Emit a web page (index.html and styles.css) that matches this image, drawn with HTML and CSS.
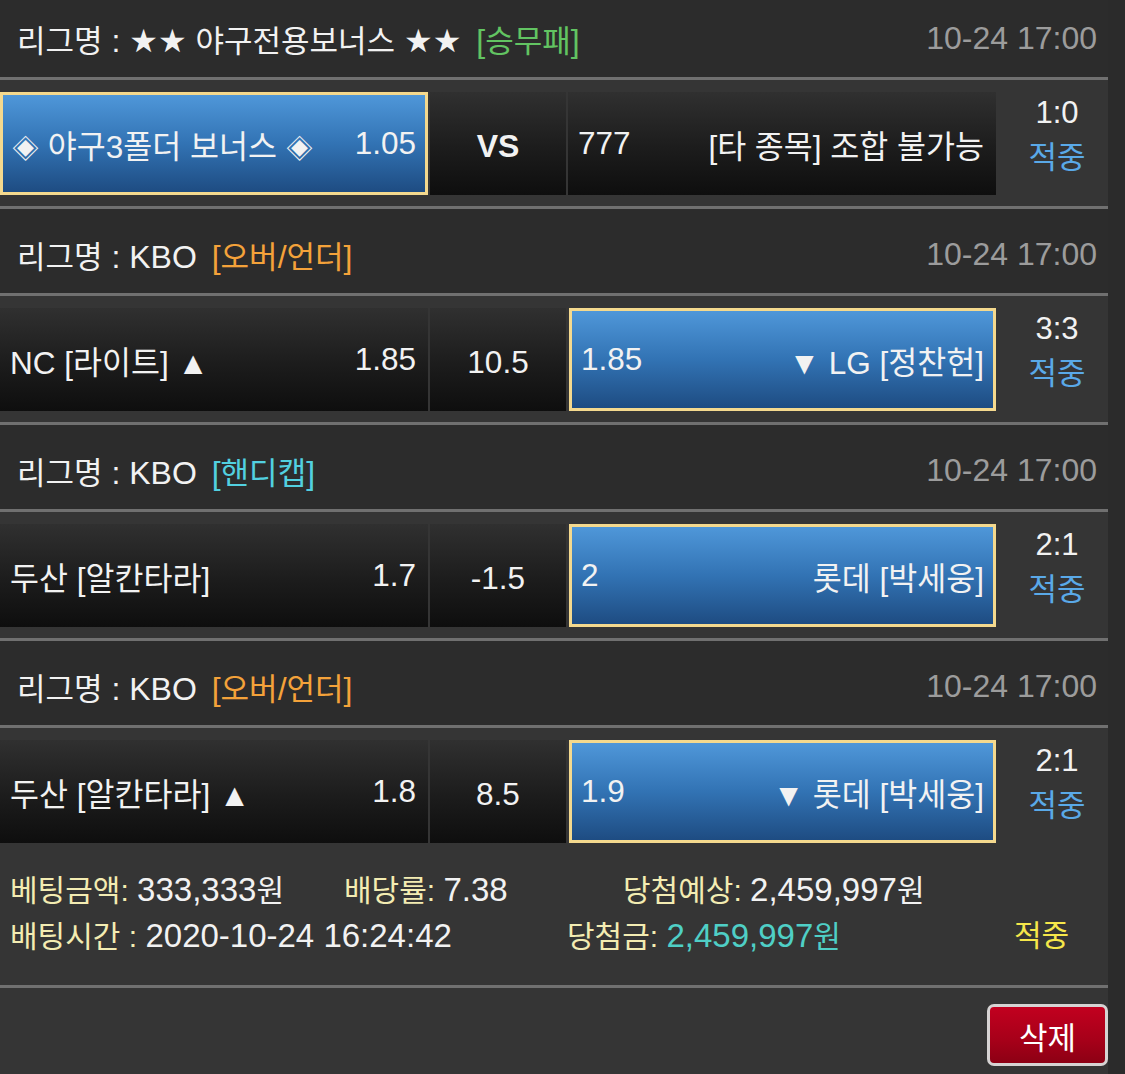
FILE: index.html
```html
<!DOCTYPE html>
<html lang="ko">
<head>
<meta charset="utf-8">
<title>Bet slip</title>
<link rel="stylesheet" href="styles.css">
</head>
<body>
<div class="slip">
  <div class="league first">
    <div class="lname"><span class="k">리그명</span> : ★★ <span class="k">야구전용보너스</span> ★★ <span class="tag green">[<span class="k">승무패</span>]</span></div>
    <div class="ldate">10-24 17:00</div>
  </div>
  <div class="match">
    <div class="cell pick"><span><span class="sym">◈</span> 야구3폴더 보너스 <span class="sym">◈</span></span><span>1.05</span></div>
    <div class="cell mid vs">VS</div>
    <div class="cell"><span>777</span><span>[타 종목] 조합 불가능</span></div>
    <div class="score"><div>1:0</div><div class="hit">적중</div></div>
  </div>

  <div class="league">
    <div class="lname"><span class="k">리그명</span> : KBO <span class="tag orange">[<span class="k">오버</span>/<span class="k">언더</span>]</span></div>
    <div class="ldate">10-24 17:00</div>
  </div>
  <div class="match">
    <div class="cell"><span>NC [라이트] ▲</span><span>1.85</span></div>
    <div class="cell mid">10.5</div>
    <div class="cell pick"><span>1.85</span><span>▼ LG [정찬헌]</span></div>
    <div class="score"><div>3:3</div><div class="hit">적중</div></div>
  </div>

  <div class="league">
    <div class="lname"><span class="k">리그명</span> : KBO <span class="tag cyan">[<span class="k">핸디캡</span>]</span></div>
    <div class="ldate">10-24 17:00</div>
  </div>
  <div class="match">
    <div class="cell"><span>두산 [알칸타라]</span><span>1.7</span></div>
    <div class="cell mid">-1.5</div>
    <div class="cell pick"><span>2</span><span>롯데 [박세웅]</span></div>
    <div class="score"><div>2:1</div><div class="hit">적중</div></div>
  </div>

  <div class="league">
    <div class="lname"><span class="k">리그명</span> : KBO <span class="tag orange">[<span class="k">오버</span>/<span class="k">언더</span>]</span></div>
    <div class="ldate">10-24 17:00</div>
  </div>
  <div class="match last">
    <div class="cell"><span>두산 [알칸타라] ▲</span><span>1.8</span></div>
    <div class="cell mid">8.5</div>
    <div class="cell pick"><span>1.9</span><span>▼ 롯데 [박세웅]</span></div>
    <div class="score"><div>2:1</div><div class="hit">적중</div></div>
  </div>

  <div class="summary">
    <div class="srow">
      <div class="si w1"><span class="lbl">베팅금액:</span> <span class="num">333,333</span>원</div>
      <div class="si w2"><span class="lbl">배당률:</span> <span class="num">7.38</span></div>
      <div class="si"><span class="lbl">당첨예상:</span> <span class="num">2,459,997</span>원</div>
    </div>
    <div class="srow">
      <div class="si w3"><span class="lbl">배팅시간 :</span> <span class="num">2020-10-24 16:24:42</span></div>
      <div class="si w4"><span class="lbl">당첨금:</span> <span class="win"><span class="num">2,459,997</span>원</span></div>
      <div class="si result">적중</div>
    </div>
  </div>

  <div class="actions">
    <button class="del" type="button">삭제</button>
  </div>
</div>
</body>
</html>
```

FILE: styles.css
```css
* { box-sizing: border-box; }

html, body {
  margin: 0;
  padding: 0;
  background: #2b2b2b;
}

body {
  font-family: "Liberation Sans", "DejaVu Sans", "Noto Sans CJK KR", sans-serif;
  color: #f2f2f2;
  font-size: 30px;
  width: 1125px;
  height: 1074px;
  overflow: hidden;
}

.slip {
  width: 1108px;
  background: #353535;
}

.league {
  height: 87px;
  padding: 6px 11px 0 17px;
  display: flex;
  align-items: center;
  justify-content: space-between;
  background: #2c2c2c;
  border-bottom: 3px solid #707070;
  font-size: 32px;
  white-space: nowrap;
}

.league .k {
  font-size: 31px;
}

.league.first {
  height: 80px;
  padding-top: 0;
}

.ldate {
  color: #9c9c9c;
}

.tag { margin-left: 6px; }
.green { color: #62c462; }
.orange { color: #f4a23a; }
.cyan { color: #52d0e0; }

.match {
  display: grid;
  grid-template-columns: 428px 136px 428px 1fr;
  column-gap: 2px;
  padding: 12px 0 11px;
  height: 129px;
  border-bottom: 3px solid #707070;
}

.match.last {
  height: 115px;
  padding-bottom: 0;
  border-bottom: 0;
}

.cell {
  height: 103px;
  display: flex;
  align-items: center;
  justify-content: space-between;
  padding: 0 12px 0 10px;
  font-size: 31.5px;
  background: linear-gradient(to bottom, #303030 0%, #1c1c1c 55%, #0e0e0e 100%);
  white-space: nowrap;
}

.cell.mid {
  justify-content: center;
  padding: 6px 0 0;
}

.cell.vs {
  font-weight: bold;
  font-size: 32px;
}

.cell.pick {
  background: linear-gradient(to bottom, #4f97d9 0%, #3273b4 50%, #1e4c82 100%);
  border: 3px solid #f4d98e;
  padding: 0 9px 0 9px;
}

.match .cell.pick:nth-child(3) {
  margin-left: 1px;
  width: 427px;
}

.sym {
  font-family: "Noto Sans CJK KR", sans-serif;
  font-size: 27px;
}

.score {
  padding-left: 8px;
  text-align: center;
  line-height: 45px;
  font-size: 31px;
  margin-top: -2px;
}

.hit {
  color: #5aa9e8;
}

.summary {
  padding: 24px 0 26px 10px;
  border-bottom: 3px solid #707070;
  line-height: 45px;
}

.num {
  font-size: 33px;
}

.srow {
  display: flex;
  white-space: nowrap;
}

.w1 { width: 334px; }
.w2 { width: 279px; }
.w3 { width: 557px; }
.w4 { width: 447px; }

.lbl { color: #f3ecb2; }
.win { color: #4fcfc6; }
.result { color: #f6e74a; }

.actions {
  display: flex;
  justify-content: flex-end;
  padding: 16px 0 8px;
}

.del {
  width: 121px;
  height: 62px;
  border: 3px solid #d6d3d3;
  border-radius: 7px;
  background: linear-gradient(to bottom, #c2001f 0%, #a60019 60%, #8c0014 100%);
  color: #ffffff;
  font-family: "Liberation Sans", "Noto Sans CJK KR", sans-serif;
  font-size: 31px;
  padding: 0;
}
```
